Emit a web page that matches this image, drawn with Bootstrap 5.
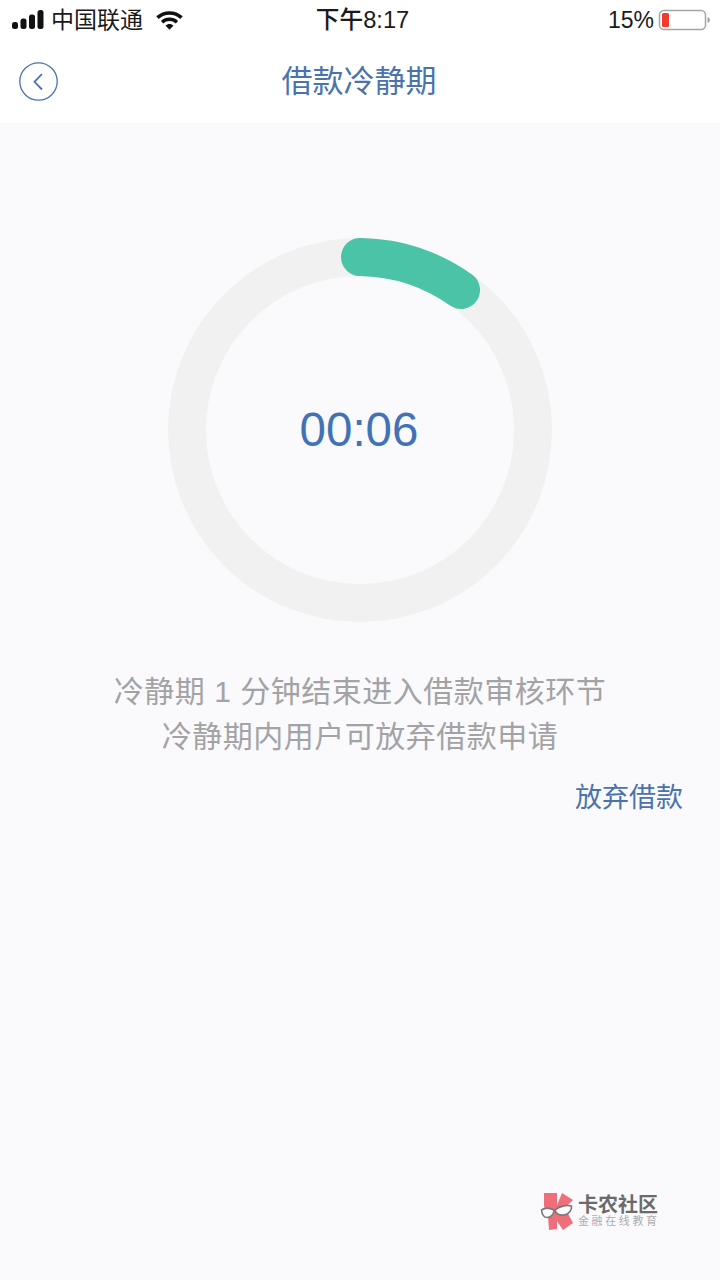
<!DOCTYPE html>
<html lang="zh-CN">
<head>
  <meta charset="UTF-8">
  <title>借款冷静期</title>
  <link href="https://cdn.jsdelivr.net/npm/bootstrap@5.3.3/dist/css/bootstrap.min.css" rel="stylesheet">
  <style>
    body {
      background: #fafafc;
      font-family: "Liberation Sans", "Noto Sans CJK SC", sans-serif;
    }
    .phone-page { width: 720px; height: 1280px; overflow: hidden; }
    .status-bar { height: 40px; padding: 0 10px 0 12px; color: #1a1a1a; font-size: 23px; }
    .status-left { width: 280px; }
    .status-right { width: 277px; }
    .status-time { font-size: 23.700px; font-weight: 500; padding-top: 2px; }
    .carrier { margin-left: 7px; margin-right: 13px; }
    .top-nav { height: 83px; background: #fff; }
    .nav-title { color: #4a73ad; font-size: 31px; line-height: 1; margin-right: 2px; }
    .back-btn { left: 19px; top: 22px; width: 39px; height: 39px; padding: 0; border: 0; background: none; line-height: 0; }
    .ring-wrap { width: 384px; height: 384px; margin-top: 115px; }
    .timer { color: #4272b6; font-size: 47.500px; line-height: 1; margin: 0 2px 1px 0; }
    .intro-text { margin-top: 47px; color: #a3a3a6; font-size: 30px; line-height: 45px; letter-spacing: .5px; }
    .giveup-link { color: #4a73ad; font-size: 27px; line-height: 40px; margin-top: 19px; padding-right: 37px; text-decoration: none; }
    .wm { padding: 0 62px 50px 0; gap: 2px; }
    .wm-title { color: #6b6b6b; font-size: 20px; line-height: 22px; font-weight: 700; }
    .wm-sub { color: #adadad; font-size: 11px; line-height: 13px; letter-spacing: 2.600px; margin: -1px -2.600px 0 0; white-space: nowrap; }
  </style>
</head>
<body>
  <div class="phone-page d-flex flex-column">
    <div class="status-bar bg-white d-flex align-items-center justify-content-between">
      <div class="status-left d-flex align-items-center">
        <svg width="32" height="20" viewBox="0 0 32 20">
          <rect x="0" y="12" width="6" height="7" rx="2.500" fill="#111"/>
          <rect x="8.500" y="8.500" width="6" height="10.500" rx="2.500" fill="#111"/>
          <rect x="17" y="4.500" width="6" height="14.500" rx="2.500" fill="#111"/>
          <rect x="25.500" y="0" width="6" height="19" rx="2.500" fill="#111"/>
        </svg>
        <span class="carrier">中国联通</span>
        <svg width="27" height="21" viewBox="0 0 28 21">
          <path d="M1.500 7.500C8.500 1 19.500 1 26.500 7.500" fill="none" stroke="#111" stroke-width="3.600"/>
          <path d="M6.300 12.300C10.800 8.300 17.200 8.300 21.700 12.300" fill="none" stroke="#111" stroke-width="3.600"/>
          <path d="M9.800 15.800C12.300 13.600 15.700 13.600 18.200 15.800L14 20z" fill="#111"/>
        </svg>
      </div>
      <div class="status-time">下午8:17</div>
      <div class="status-right d-flex align-items-center justify-content-end gap-1">
        <span>15%</span>
        <svg width="52" height="22" viewBox="0 0 52 22">
          <rect x="1.500" y="1.500" width="46" height="19" rx="4.500" fill="#fff" stroke="#a5a5a5" stroke-width="1.500"/>
          <rect x="4" y="4" width="7" height="14" rx="1.500" fill="#f5392f"/>
          <path d="M49.500 8C51 8.500 52 9.500 52 11S51 13.500 49.500 14z" fill="#a5a5a5"/>
        </svg>
      </div>
    </div>

    <div class="top-nav position-relative d-flex align-items-center justify-content-center">
      <button class="back-btn position-absolute" type="button" aria-label="返回">
        <svg width="39" height="39" viewBox="0 0 39 39">
          <circle cx="19.500" cy="19.500" r="18.700" fill="none" stroke="#4a73ad" stroke-width="1.300"/>
          <path d="M23 12L15.500 19.800L23 27.500" fill="none" stroke="#4a73ad" stroke-width="1.800"/>
        </svg>
      </button>
      <div class="nav-title">借款冷静期</div>
    </div>

    <div class="flex-grow-1 d-flex flex-column align-items-center">
      <div class="ring-wrap position-relative d-flex align-items-center justify-content-center">
        <svg class="position-absolute top-0 start-0" width="384" height="384" viewBox="0 0 384 384">
          <circle cx="192" cy="192" r="173" fill="none" stroke="#f1f1f1" stroke-width="38"/>
          <path d="M192 19A180 180 0 0 1 293 52" fill="none" stroke="#4bc3a7" stroke-width="38" stroke-linecap="round"/>
        </svg>
        <div class="timer position-relative">00:06</div>
      </div>
      <div class="intro-text text-center">冷静期 1 分钟结束进入借款审核环节<br>冷静期内用户可放弃借款申请</div>
      <a class="giveup-link align-self-end" href="#">放弃借款</a>
      <div class="wm mt-auto align-self-end d-flex align-items-center">
        <svg width="36" height="38" viewBox="0 0 36 38">
          <path d="M4 1H17V13L22 1L33 8L25 16L33 31L23 38L17 29L17 37L9 38L8 24L4 14z" fill="#ec6f79"/>
          <path d="M1.500 18C5 15.500 10 16 14 18C14 22 11 25.500 7 25.500C3.500 25.500 2 22 1.500 18z" fill="#fafafc" stroke="#777" stroke-width="1.600"/>
          <path d="M15 18C19 14.500 26 12.500 31.500 14C32 18 29 22.500 24 23C19.500 23.500 16 21.500 15 18z" fill="#fafafc" stroke="#777" stroke-width="1.600"/>
        </svg>
        <div>
          <div class="wm-title">卡农社区</div>
          <div class="wm-sub">金融在线教育</div>
        </div>
      </div>
    </div>
  </div>
  <script src="https://cdn.jsdelivr.net/npm/bootstrap@5.3.3/dist/js/bootstrap.bundle.min.js"></script>
</body>
</html>
